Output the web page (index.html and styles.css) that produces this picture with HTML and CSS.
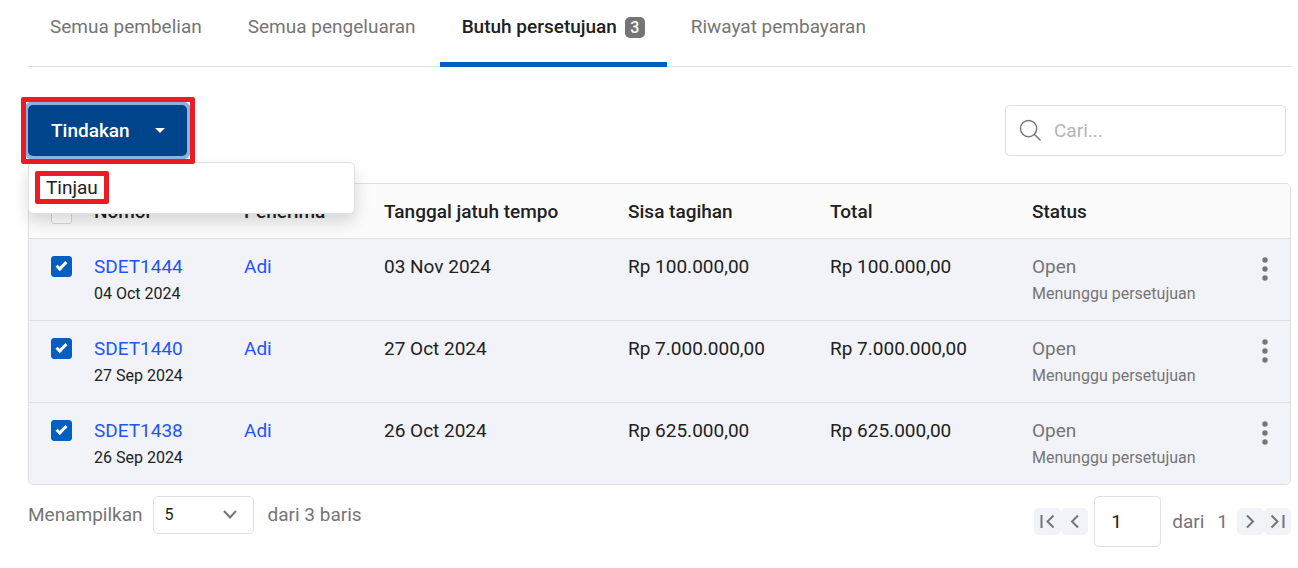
FILE: index.html
```html
<!DOCTYPE html>
<html lang="id">
<head>
<meta charset="utf-8">
<meta name="viewport" content="width=device-width, initial-scale=1">
<title>Pembelian</title>
<link rel="stylesheet" href="styles.css">
</head>
<body>
<main class="page">
  <nav class="tabs">
    <a class="tab" href="#pembelian">Semua pembelian</a>
    <a class="tab" href="#pengeluaran">Semua pengeluaran</a>
    <a class="tab tab-active" href="#persetujuan" aria-current="page">Butuh persetujuan <span class="count">3</span></a>
    <a class="tab" href="#riwayat">Riwayat pembayaran</a>
  </nav>

  <div class="toolbar">
    <div class="dropdown">
      <div class="highlight highlight-button">
        <button class="action" type="button" aria-expanded="true">Tindakan <span class="caret"></span></button>
      </div>
      <div class="menu">
        <a class="menu-item highlight-item" href="#tinjau">Tinjau</a>
      </div>
    </div>
    <label class="search">
      <svg class="search-icon" viewBox="0 0 24 24" aria-hidden="true"><circle cx="10" cy="10" r="8.5"/><path d="M16 16l6.500 6.500"/></svg>
      <input class="search-input" type="text" placeholder="Cari..." aria-label="Cari">
    </label>
  </div>

  <div class="table-box">
    <table class="table">
      <colgroup>
        <col class="col-check"><col class="col-number"><col class="col-payee"><col class="col-due"><col class="col-money"><col class="col-money"><col class="col-status"><col class="col-more">
      </colgroup>
      <thead>
        <tr>
          <th class="check-cell"><input class="check" type="checkbox" aria-label="Pilih semua"></th>
          <th>Nomor</th><th>Penerima</th><th>Tanggal jatuh tempo</th><th>Sisa tagihan</th><th>Total</th><th>Status</th><th></th>
        </tr>
      </thead>
      <tbody>
        <tr>
          <td class="check-cell"><input class="check" type="checkbox" checked aria-label="Pilih SDET1444"></td>
          <td><a class="link" href="#1444">SDET1444</a><div class="sub">04 Oct 2024</div></td>
          <td><a class="link" href="#adi">Adi</a></td>
          <td>03 Nov 2024</td><td>Rp 100.000,00</td><td>Rp 100.000,00</td>
          <td class="muted">Open<div class="sub">Menunggu persetujuan</div></td>
          <td class="more-cell"><button class="more" type="button" aria-label="Menu SDET1444"><svg class="dots" viewBox="0 0 6 24"><circle cx="3" cy="3" r="2.700"/><circle cx="3" cy="12" r="2.700"/><circle cx="3" cy="21" r="2.700"/></svg></button></td>
        </tr>
        <tr>
          <td class="check-cell"><input class="check" type="checkbox" checked aria-label="Pilih SDET1440"></td>
          <td><a class="link" href="#1440">SDET1440</a><div class="sub">27 Sep 2024</div></td>
          <td><a class="link" href="#adi">Adi</a></td>
          <td>27 Oct 2024</td><td>Rp 7.000.000,00</td><td>Rp 7.000.000,00</td>
          <td class="muted">Open<div class="sub">Menunggu persetujuan</div></td>
          <td class="more-cell"><button class="more" type="button" aria-label="Menu SDET1440"><svg class="dots" viewBox="0 0 6 24"><circle cx="3" cy="3" r="2.700"/><circle cx="3" cy="12" r="2.700"/><circle cx="3" cy="21" r="2.700"/></svg></button></td>
        </tr>
        <tr>
          <td class="check-cell"><input class="check" type="checkbox" checked aria-label="Pilih SDET1438"></td>
          <td><a class="link" href="#1438">SDET1438</a><div class="sub">26 Sep 2024</div></td>
          <td><a class="link" href="#adi">Adi</a></td>
          <td>26 Oct 2024</td><td>Rp 625.000,00</td><td>Rp 625.000,00</td>
          <td class="muted">Open<div class="sub">Menunggu persetujuan</div></td>
          <td class="more-cell"><button class="more" type="button" aria-label="Menu SDET1438"><svg class="dots" viewBox="0 0 6 24"><circle cx="3" cy="3" r="2.700"/><circle cx="3" cy="12" r="2.700"/><circle cx="3" cy="21" r="2.700"/></svg></button></td>
        </tr>
      </tbody>
    </table>
  </div>

  <footer class="footer">
    <div class="page-size">
      <label for="size">Menampilkan</label>
      <span class="select-box">
        <select class="select" id="size"><option>5</option><option>10</option></select>
        <svg class="chevron" viewBox="0 0 14 9" aria-hidden="true"><path d="M1 1l6 6.500 6-6.500"/></svg>
      </span>
      <span class="rows">dari 3 baris</span>
    </div>
    <div class="pager">
      <div class="pair">
        <button class="step" type="button" aria-label="Halaman pertama"><svg class="step-icon" viewBox="0 0 15 15"><path d="M1.500 1v13M13.500 1.500l-6 6 6 6"/></svg></button>
        <button class="step" type="button" aria-label="Halaman sebelumnya"><svg class="step-icon" viewBox="0 0 15 15"><path d="M11 1.500l-6 6 6 6"/></svg></button>
      </div>
      <input class="page-input" type="text" value="1" aria-label="Halaman">
      <span class="total">dari <span>1</span></span>
      <div class="pair">
        <button class="step" type="button" aria-label="Halaman berikutnya"><svg class="step-icon" viewBox="0 0 15 15"><path d="M4 1.500l6 6-6 6"/></svg></button>
        <button class="step" type="button" aria-label="Halaman terakhir"><svg class="step-icon" viewBox="0 0 15 15"><path d="M1.500 1.500l6 6-6 6M13.500 1v13"/></svg></button>
      </div>
    </div>
  </footer>
</main>
</body>
</html>
```

FILE: styles.css
```css
*, *::before, *::after { box-sizing: border-box; }

body {
  margin: 0;
  background: #fff;
  color: #212121;
  font: 19px/28px Roboto, "Liberation Sans", sans-serif;
}

a { color: inherit; text-decoration: none; }
button, input, select { font: inherit; color: inherit; }

.page { padding: 0 7px 20px 28px; }

.tabs { display: flex; gap: 2px; border-bottom: 1px solid #e0e0e0; }
.tab {
  margin-bottom: -1px;
  padding: 13px 22px 21px;
  border-bottom: 5px solid transparent;
  color: #757575;
  white-space: nowrap;
}
.tab-active { border-color: #005fbf; color: #212121; font-weight: 500; }
.count {
  display: inline-block;
  width: 20px;
  margin-left: 3px;
  border-radius: 5px;
  background: #757575;
  color: #fff;
  font-size: 16px;
  line-height: 21px;
  text-align: center;
}

.toolbar {
  display: flex;
  justify-content: space-between;
  padding: 38px 5px 27px 0;
}
.dropdown { position: relative; z-index: 1; }
.highlight { position: relative; z-index: 1; }
.highlight-button::after {
  content: "";
  position: absolute;
  inset: -8px -8px -8px -7px;
  border: 5px solid #ed1c24;
  border-radius: 2px;
  pointer-events: none;
}
.action {
  display: flex;
  align-items: center;
  gap: 25px;
  height: 51px;
  padding: 0 22px 0 23px;
  border: 0;
  border-radius: 5px;
  background: #00458b;
  box-shadow: 0 0 0 4px #8cb3df;
  color: #fff;
  font-weight: 500;
}
.caret {
  border: 5px solid transparent;
  border-top-color: #fff;
  border-bottom: 0;
}
.menu {
  position: absolute;
  top: 57px;
  left: 0;
  width: 327px;
  padding: 8px 7px 9px 6px;
  border: 1px solid #e0e0e0;
  border-radius: 5px;
  background: #fff;
  box-shadow: 0 8px 16px rgba(0, 0, 0, .15);
}
.menu-item {
  display: block;
  width: fit-content;
  padding: 0 6px;
  line-height: 23px;
}
.highlight-item { border: 5px solid #ed1c24; border-radius: 2px; }

.search {
  display: flex;
  align-items: center;
  gap: 12px;
  width: 281px;
  height: 51px;
  padding: 0 13px;
  border: 1px solid #e0e0e0;
  border-radius: 5px;
}
.search-icon { flex: none; width: 23px; height: 23px; fill: none; stroke: #757575; stroke-width: 1.5; }
.search-input { min-width: 0; width: 100%; padding: 0; border: 0; outline: 0; background: none; }
.search-input::placeholder { color: #b5b5b5; }

.table-box { border: 1px solid #e0e0e0; border-radius: 5px; overflow: hidden; }
.table { width: 100%; border-collapse: collapse; table-layout: fixed; }
.col-check { width: 65px; }
.col-number { width: 150px; }
.col-payee { width: 140px; }
.col-due { width: 244px; }
.col-money { width: 202px; }
.col-more { width: 50px; }
th { height: 54px; padding: 2px 0 0; background: #fbfbfb; font-weight: 500; text-align: left; }
td {
  height: 82px;
  padding: 14px 0 0;
  border-top: 1px solid #e0e0e0;
  background: #f2f3f8;
  vertical-align: top;
}
.check-cell { padding-left: 22px; }
.check {
  display: block;
  appearance: none;
  width: 21px;
  height: 21px;
  margin: 3px 0 0;
  border: 1px solid #d8d8d8;
  border-radius: 3px;
  background: #fff;
}
.check:checked {
  display: grid;
  place-items: center;
  border-color: #005fbf;
  background: #005fbf;
}
.check:checked::before {
  content: "";
  width: 11px;
  height: 6px;
  margin-bottom: 3px;
  border: solid #fff;
  border-width: 0 0 3px 3px;
  rotate: -45deg;
}
.link { color: #1f55ff; }
.sub { font-size: 16px; line-height: 26px; }
.muted { color: #757575; }
.more-cell { padding-left: 22px; }
.more { display: block; margin-top: 4px; padding: 0; border: 0; background: none; }
.dots { display: block; width: 6px; height: 24px; fill: #757575; }

.footer {
  display: flex;
  align-items: flex-start;
  justify-content: space-between;
  padding-top: 11px;
  color: #757575;
}
.page-size { display: flex; align-items: center; gap: 10px; }
.select-box { position: relative; }
.select {
  display: block;
  appearance: none;
  width: 101px;
  height: 38px;
  padding: 0 11px;
  border: 1px solid #e0e0e0;
  border-radius: 5px;
  background: #fff;
  color: #212121;
  font-size: 16px;
}
.chevron {
  position: absolute;
  top: 14px;
  right: 17px;
  width: 14px;
  height: 9px;
  fill: none;
  stroke: #757575;
  stroke-width: 2;
  pointer-events: none;
}
.rows { padding-left: 4px; }
.pager { display: flex; align-items: center; }
.pair { display: flex; }
.step {
  display: grid;
  place-items: center;
  width: 27px;
  height: 27px;
  padding: 0;
  border: 0;
  border-radius: 5px;
  background: #f2f3f8;
}
.step-icon { width: 15px; height: 15px; fill: none; stroke: #757575; stroke-width: 2; }
.page-input {
  width: 67px;
  height: 51px;
  margin: 0 11px 0 6px;
  padding: 0 16px;
  border: 1px solid #e0e0e0;
  border-radius: 5px;
  color: #212121;
}
.total { display: flex; gap: 13px; margin-right: 9px; }
```
